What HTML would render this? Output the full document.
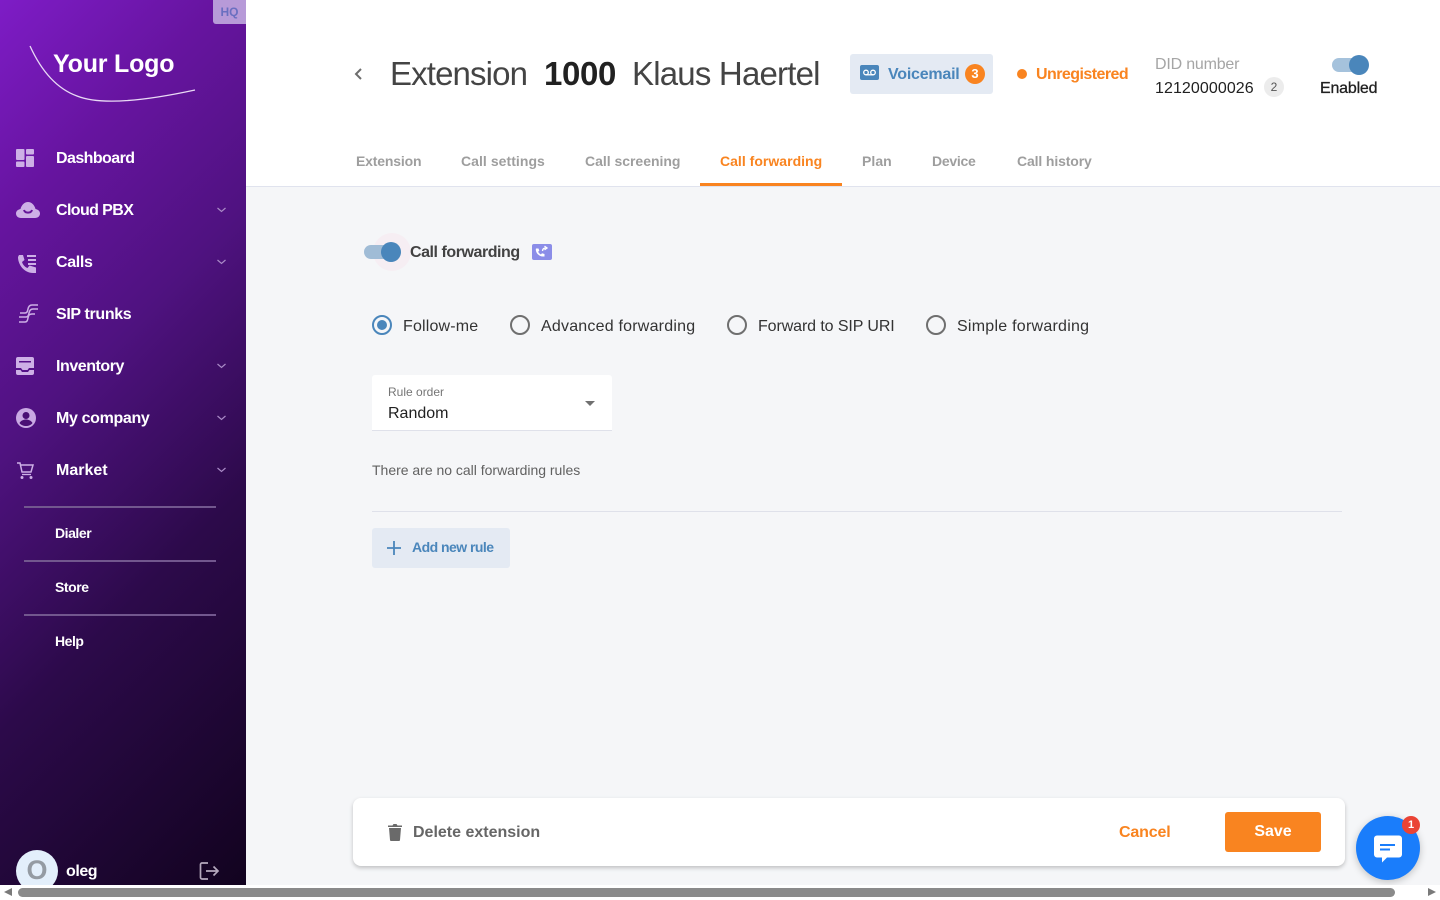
<!DOCTYPE html>
<html lang="en">
<head>
<meta charset="utf-8">
<title>Extension 1000 Klaus Haertel</title>
<style>
html,body{margin:0;padding:0;width:1440px;height:900px;overflow:hidden;background:#f5f6f8;font-family:"Liberation Sans",Arial,sans-serif;}
.a{position:absolute;white-space:nowrap;}
#side{position:absolute;left:0;top:0;width:246px;height:885px;overflow:hidden;background:linear-gradient(135deg,#7e1cc6 0%,#66149f 20%,#4f1280 40%,#2c0a4a 65%,#12031f 100%);}
#top{position:absolute;left:246px;top:0;width:1194px;height:186px;background:#fff;border-bottom:1px solid #e0e3ee;}
.nav{position:absolute;left:56px;color:#fff;font-size:16px;font-weight:bold;line-height:20px;white-space:nowrap;}
.sub{position:absolute;left:55px;color:#fff;font-size:14px;font-weight:bold;line-height:18px;letter-spacing:-.45px;}
.hr{position:absolute;left:24px;width:192px;height:2px;background:#72578e;}
.ico{position:absolute;}
.chev{position:absolute;left:216px;}
.tab{position:absolute;top:152px;color:#9e9e9e;font-size:14px;font-weight:bold;line-height:18px;white-space:nowrap;}
.rad{position:absolute;top:315px;width:16px;height:16px;border:2px solid #6f6f6f;border-radius:50%;}
.lab{position:absolute;top:317px;font-size:16px;line-height:20px;color:#333;white-space:nowrap;}
</style>
</head>
<body>
<div id="top"></div>

<div id="side">
  <div class="a" style="left:213px;top:0;width:33px;height:24px;background:#b79ad8;border-bottom-left-radius:3px;color:#6a6fc0;font-size:12px;font-weight:bold;line-height:24px;text-align:center;">HQ</div>
  <svg class="a" style="left:25px;top:40px" width="175" height="66" viewBox="0 0 175 66"><path d="M5 6C15 28 30 48 52 56C72 64 110 63 170 50" fill="none" stroke="#e9daf5" stroke-width="1.300"/></svg>
  <div class="a" style="left:53px;top:49px;color:#fff;font-size:25px;font-weight:bold;line-height:30px;letter-spacing:-.2px;">Your Logo</div>

  <svg class="ico" style="left:16px;top:149px" width="18" height="18" viewBox="0 0 18 18" fill="#cdb0e6"><rect x="0" y="0" width="8.500" height="11" rx="1"/><rect x="0" y="12.500" width="8.500" height="5.500" rx="1"/><rect x="10" y="0" width="8" height="5.500" rx="1"/><rect x="10" y="7" width="8" height="11" rx="1"/></svg>
  <div class="nav" style="top:149px;letter-spacing:-.57px">Dashboard</div>

  <svg class="ico" style="left:16px;top:202px" width="24" height="16" viewBox="0 0 24 16"><path d="M5 16C2 16 0 14 0 11.500C0 9 2 7.500 4.500 7C5.500 3 8.500 0 12 0C15.500 0 18.500 3 19.500 7C22 7.500 24 9 24 11.500C24 14 22 16 19 16Z" fill="#cdb0e6"/><path d="M8 8c1 3.500 7 3.500 8 0" fill="none" stroke="#651699" stroke-width="2"/></svg>
  <div class="nav" style="top:201px;letter-spacing:-.6px">Cloud PBX</div>
  <svg class="chev" style="top:206px" width="11" height="8" viewBox="0 0 11 8"><path d="M1.500 2l4 3.500 4-3.500" fill="none" stroke="#a98ac6" stroke-width="1.200"/></svg>

  <svg class="ico" style="left:18px;top:255px" width="18" height="18" viewBox="0 0 18 18" fill="#cdb0e6"><path d="M1 0h4l1.500 5-2.500 2c1 3 3 5 5.500 6l2-2.500 6.500 2V18h-3C6 18 0 9.500 0 2z"/><path d="M9 0h9v2H9zM10 4h8v2h-8zM10 8h8v2h-8z"/></svg>
  <div class="nav" style="top:253px;letter-spacing:-.35px">Calls</div>
  <svg class="chev" style="top:258px" width="11" height="8" viewBox="0 0 11 8"><path d="M1.500 2l4 3.500 4-3.500" fill="none" stroke="#a98ac6" stroke-width="1.200"/></svg>

  <svg class="ico" style="left:18px;top:304px" width="20" height="19" viewBox="0 0 20 19" fill="none" stroke="#cdb0e6" stroke-width="1.500"><path d="M2 9h5c2 0 2.500-1.500 3-4s1.500-4 4-4h6"/><path d="M1 13h7c2 0 2.500-1.500 3-4s1.500-4 4-4h5"/><path d="M1 18h6c2 0 2.500-1.500 3-4s1-4 4-4h3"/></svg>
  <div class="nav" style="top:305px;letter-spacing:-.35px">SIP trunks</div>

  <svg class="ico" style="left:16px;top:357px" width="18" height="18" viewBox="0 0 18 18" fill="#cdb0e6"><path fill-rule="evenodd" d="M2 0h14a2 2 0 0 1 2 2v9h-5l-1.500 2h-5L5 11H0V2a2 2 0 0 1 2-2zM3 4v1.500h12V4z"/><path d="M0 13h4.500l1.500 2h6l1.500-2H18v3a2 2 0 0 1-2 2H2a2 2 0 0 1-2-2z"/></svg>
  <div class="nav" style="top:357px;letter-spacing:-.45px">Inventory</div>
  <svg class="chev" style="top:362px" width="11" height="8" viewBox="0 0 11 8"><path d="M1.500 2l4 3.500 4-3.500" fill="none" stroke="#a98ac6" stroke-width="1.200"/></svg>

  <svg class="ico" style="left:14px;top:406px" width="24" height="24" viewBox="0 0 24 24"><circle cx="12" cy="12" r="10" fill="#c9a9e3"/><circle cx="12" cy="9.500" r="3.500" fill="#4a0f75"/><path d="M5.500 17c1.500-2.500 4-3.500 6.500-3.500s5 1 6.500 3.500c-1.500 2-4 3-6.500 3s-5-1-6.500-3z" fill="#4a0f75"/></svg>
  <div class="nav" style="top:409px;letter-spacing:-.35px">My company</div>
  <svg class="chev" style="top:414px" width="11" height="8" viewBox="0 0 11 8"><path d="M1.500 2l4 3.500 4-3.500" fill="none" stroke="#a98ac6" stroke-width="1.200"/></svg>

  <svg class="ico" style="left:17px;top:462px" width="17" height="17" viewBox="0 0 17 17"><path d="M0 1h3l2 9h9l2-7H4" fill="none" stroke="#cdb0e6" stroke-width="1.500"/><path d="M5 12.500h9" stroke="#cdb0e6" stroke-width="1.300"/><circle cx="5" cy="15.500" r="1.500" fill="#cdb0e6"/><circle cx="14" cy="15.500" r="1.500" fill="#cdb0e6"/></svg>
  <div class="nav" style="top:461px;letter-spacing:0">Market</div>
  <svg class="chev" style="top:466px" width="11" height="8" viewBox="0 0 11 8"><path d="M1.500 2l4 3.500 4-3.500" fill="none" stroke="#a98ac6" stroke-width="1.200"/></svg>

  <div class="hr" style="top:506px"></div>
  <div class="sub" style="top:524px">Dialer</div>
  <div class="hr" style="top:560px"></div>
  <div class="sub" style="top:578px">Store</div>
  <div class="hr" style="top:614px"></div>
  <div class="sub" style="top:632px">Help</div>

  <div class="a" style="left:16px;top:850px;width:42px;height:42px;border-radius:50%;background:#e3effb;color:#949ba3;font-size:27px;font-weight:bold;line-height:41px;text-align:center;">O</div>
  <div class="a" style="left:66px;top:862px;color:#fff;font-size:16px;font-weight:bold;line-height:20px;letter-spacing:-.45px;">oleg</div>
  <svg class="a" style="left:198px;top:860px" width="24" height="22" viewBox="0 0 24 22" fill="none" stroke="#b5a9bd" stroke-width="1.700"><path d="M10 3H4a1.500 1.500 0 0 0-1.500 1.500v13A1.500 1.500 0 0 0 4 19h6"/><path d="M8 11h12M15.500 6.500L20 11l-4.500 4.500"/></svg>
</div>

<!-- Header -->
<svg class="a" style="left:351px;top:66px" width="14" height="16" viewBox="0 0 14 16"><path d="M10 3L5 8l5 5" fill="none" stroke="#6d6d6d" stroke-width="2"/></svg>
<div class="a" style="left:390px;top:54px;color:#444;font-size:33px;line-height:40px;letter-spacing:-.87px;">Extension</div>
<div class="a" style="left:544px;top:54px;color:#212121;font-size:33px;font-weight:bold;line-height:40px;letter-spacing:-.35px;">1000</div>
<div class="a" style="left:632px;top:54px;color:#444;font-size:33px;line-height:40px;letter-spacing:-.8px;">Klaus Haertel</div>

<div class="a" style="left:850px;top:54px;width:143px;height:40px;background:#e4eaf3;border-radius:3px;"></div>
<svg class="a" style="left:859px;top:65px" width="22" height="16" viewBox="0 0 22 16"><rect x="1" y="0" width="19" height="15" rx="2" fill="#4a86bb"/><circle cx="7" cy="7.500" r="2.300" fill="none" stroke="#fff" stroke-width="1.300"/><circle cx="14" cy="7.500" r="2.300" fill="none" stroke="#fff" stroke-width="1.300"/><path d="M7 9.800h7" stroke="#fff" stroke-width="1.300"/></svg>
<div class="a" style="left:888px;top:65px;color:#4a86bb;font-size:16px;font-weight:bold;line-height:20px;letter-spacing:-.22px;">Voicemail</div>
<div class="a" style="left:965px;top:64px;width:20px;height:20px;background:#f98420;border-radius:50%;color:#fff;font-size:13px;font-weight:bold;line-height:20px;text-align:center;">3</div>

<div class="a" style="left:1017px;top:69px;width:10px;height:10px;background:#f98420;border-radius:50%;"></div>
<div class="a" style="left:1036px;top:65px;color:#f98420;font-size:16px;font-weight:bold;line-height:20px;letter-spacing:-.55px;">Unregistered</div>

<div class="a" style="left:1155px;top:55px;color:#a5a5a5;font-size:16px;line-height:20px;letter-spacing:-.2px;">DID number</div>
<div class="a" style="left:1155px;top:79px;color:#212121;font-size:16px;line-height:20px;letter-spacing:.08px;">12120000026</div>
<div class="a" style="left:1264px;top:77px;width:20px;height:20px;background:#ececec;border-radius:50%;color:#555;font-size:12px;line-height:20px;text-align:center;">2</div>

<div class="a" style="left:1332px;top:58px;width:34px;height:14px;background:#a5c2dc;border-radius:7px;"></div>
<div class="a" style="left:1349px;top:55px;width:20px;height:20px;background:#4a86bb;border-radius:50%;"></div>
<div class="a" style="left:1320px;top:79px;color:#212121;font-size:16px;line-height:20px;letter-spacing:-.2px;-webkit-text-stroke:.3px #212121;">Enabled</div>

<!-- Tabs -->
<div class="tab" style="left:356px;letter-spacing:-.17px">Extension</div>
<div class="tab" style="left:461px;letter-spacing:.05px">Call settings</div>
<div class="tab" style="left:585px;letter-spacing:-.02px">Call screening</div>
<div class="tab" style="left:720px;color:#f98420;letter-spacing:.02px">Call forwarding</div>
<div class="tab" style="left:862px;letter-spacing:.05px">Plan</div>
<div class="tab" style="left:932px;letter-spacing:-.28px">Device</div>
<div class="tab" style="left:1017px;letter-spacing:-.13px">Call history</div>
<div class="a" style="left:700px;top:183px;width:142px;height:3px;background:#f98420;"></div>

<!-- Toggle -->
<div class="a" style="left:373px;top:233px;width:38px;height:38px;border-radius:50%;background:#f6eef3;"></div>
<div class="a" style="left:364px;top:245px;width:34px;height:14px;background:#a0bcd6;border-radius:7px;"></div>
<div class="a" style="left:381px;top:242px;width:20px;height:20px;background:#4a86bb;border-radius:50%;"></div>
<div class="a" style="left:410px;top:243px;color:#424242;font-size:16px;font-weight:bold;line-height:20px;letter-spacing:-.45px;">Call forwarding</div>
<svg class="a" style="left:532px;top:244px" width="20" height="16" viewBox="0 0 20 16"><rect width="20" height="16" rx="2" fill="#8b8de8"/><path d="M4 4.500h2.500l.8 2.300-1.200 1c.7 1.300 1.500 2 2.800 2.700l1.100-1.200 2.500.7V12.500h-1.500C7 12.500 3.800 9 3.800 5.200z" fill="#fff"/><path d="M10.500 7c.2-2 1.200-3 3-3M12.500 2.200L15 4l-2.500 1.800" fill="none" stroke="#fff" stroke-width="1.300"/></svg>

<!-- Radios -->
<div class="rad" style="left:372px;border-color:#4a86bb;"></div>
<div class="a" style="left:377px;top:320px;width:10px;height:10px;background:#4a86bb;border-radius:50%;"></div>
<div class="lab" style="left:403px;letter-spacing:.17px">Follow-me</div>
<div class="rad" style="left:510px"></div>
<div class="lab" style="left:541px;letter-spacing:.21px">Advanced forwarding</div>
<div class="rad" style="left:727px"></div>
<div class="lab" style="left:758px;letter-spacing:-.1px">Forward to SIP URI</div>
<div class="rad" style="left:926px"></div>
<div class="lab" style="left:957px;letter-spacing:.25px">Simple forwarding</div>

<!-- Select -->
<div class="a" style="left:372px;top:375px;width:240px;height:55px;background:#fff;border-bottom:1px solid #dfe1ea;border-radius:3px 3px 0 0;"></div>
<div class="a" style="left:388px;top:384px;color:#757575;font-size:12px;line-height:16px;">Rule order</div>
<div class="a" style="left:388px;top:404px;color:#212121;font-size:16px;line-height:20px;">Random</div>
<div class="a" style="left:585px;top:401px;width:0;height:0;border-left:5px solid transparent;border-right:5px solid transparent;border-top:5px solid #707070;"></div>

<div class="a" style="left:372px;top:461px;color:#616161;font-size:14px;line-height:18px;letter-spacing:-.01px;">There are no call forwarding rules</div>
<div class="a" style="left:372px;top:511px;width:970px;height:1px;background:#dfe1ea;"></div>

<div class="a" style="left:372px;top:528px;width:138px;height:40px;background:#e4eaf3;border-radius:3px;"></div>
<svg class="a" style="left:386px;top:540px" width="16" height="16" viewBox="0 0 16 16"><path d="M8 1v14M1 8h14" stroke="#4a86bb" stroke-width="1.800"/></svg>
<div class="a" style="left:412px;top:538px;color:#4a86bb;font-size:14px;font-weight:bold;line-height:18px;letter-spacing:-.53px;">Add new rule</div>

<!-- Footer -->
<div class="a" style="left:353px;top:798px;width:992px;height:68px;background:#fff;border-radius:8px;box-shadow:0 2px 4px rgba(0,0,0,.22);"></div>
<svg class="a" style="left:387px;top:823px" width="16" height="18" viewBox="0 0 16 18" fill="#6a6a6a"><path d="M2 5h12l-1 12a1 1 0 0 1-1 1H4a1 1 0 0 1-1-1zM1 2.500h4.500L6.500 1h3l1 1.500H15V4H1z"/></svg>
<div class="a" style="left:413px;top:823px;color:#666;font-size:16px;font-weight:bold;line-height:20px;letter-spacing:0;">Delete extension</div>
<div class="a" style="left:1119px;top:823px;color:#f98420;font-size:16px;font-weight:bold;line-height:20px;letter-spacing:-.15px;">Cancel</div>
<div class="a" style="left:1225px;top:812px;width:96px;height:40px;background:#f98420;border-radius:3px;color:#fff;font-size:16px;font-weight:bold;line-height:40px;text-align:center;">Save</div>

<!-- Chat -->
<div class="a" style="left:1356px;top:816px;width:64px;height:64px;background:#1a7dfb;border-radius:50%;box-shadow:0 2px 8px rgba(0,0,0,.22);"></div>
<svg class="a" style="left:1373px;top:835px" width="30" height="30" viewBox="0 0 30 30"><path d="M4 .500h22a3 3 0 0 1 3 3v16a3 3 0 0 1-3 3H14l-5 5v-5H4a3 3 0 0 1-3-3v-16a3 3 0 0 1 3-3z" fill="#fff"/><path d="M7 10h15M7 14.500h10" stroke="#1a7dfb" stroke-width="2"/></svg>
<div class="a" style="left:1402px;top:816px;width:18px;height:18px;background:#ea4335;border-radius:50%;color:#fff;font-size:11px;font-weight:bold;line-height:18px;text-align:center;">1</div>

<!-- Scrollbar -->
<div class="a" style="left:0;top:885px;width:1440px;height:15px;background:#fff;"></div>
<div class="a" style="left:18px;top:888px;width:1377px;height:9px;background:#8a8a8a;border-radius:5px;"></div>
<div class="a" style="left:4px;top:888px;width:0;height:0;border-top:4.500px solid transparent;border-bottom:4.500px solid transparent;border-right:8px solid #7a7a7a;"></div>
<div class="a" style="left:1428px;top:888px;width:0;height:0;border-top:4.500px solid transparent;border-bottom:4.500px solid transparent;border-left:8px solid #7a7a7a;"></div>
</body>
</html>
